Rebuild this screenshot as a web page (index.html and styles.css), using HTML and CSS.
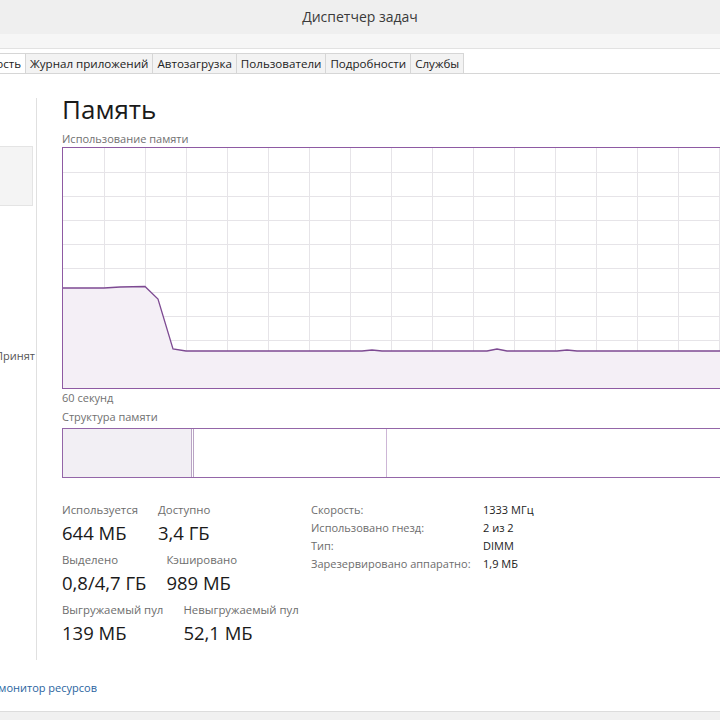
FILE: index.html
```html
<!DOCTYPE html>
<html lang="ru">
<head>
<meta charset="UTF-8">
<title>Диспетчер задач</title>
<link rel="stylesheet" href="styles.css">
</head>
<body>
<div class="window">
    <div class="titlebar">Диспетчер задач</div>
    <div class="menubar"></div>
    <div class="tabs">
        <div class="tab-clip"><div class="tab active">Производительность</div></div>
        <div class="tab">Журнал приложений</div>
        <div class="tab">Автозагрузка</div>
        <div class="tab">Пользователи</div>
        <div class="tab">Подробности</div>
        <div class="tab">Службы</div>
    </div>
    <div class="panes">
        <div class="sidebar">
            <div class="side-item selected"></div>
            <div class="side-text">Принят</div>
        </div>
        <div class="main">
            <h1 class="heading">Память</h1>
            <div class="caption">Использование памяти</div>
            <svg class="graph" width="700" height="242" viewBox="0 0 700 242">
                <g stroke="#e6e4e8" stroke-width="1">
                    <line x1="42.5" y1="1" x2="42.5" y2="241"/>
                    <line x1="83.5" y1="1" x2="83.5" y2="241"/>
                    <line x1="124.5" y1="1" x2="124.5" y2="241"/>
                    <line x1="165.5" y1="1" x2="165.5" y2="241"/>
                    <line x1="206.5" y1="1" x2="206.5" y2="241"/>
                    <line x1="247.5" y1="1" x2="247.5" y2="241"/>
                    <line x1="288.5" y1="1" x2="288.5" y2="241"/>
                    <line x1="329.5" y1="1" x2="329.5" y2="241"/>
                    <line x1="370.5" y1="1" x2="370.5" y2="241"/>
                    <line x1="411.5" y1="1" x2="411.5" y2="241"/>
                    <line x1="452.5" y1="1" x2="452.5" y2="241"/>
                    <line x1="493.5" y1="1" x2="493.5" y2="241"/>
                    <line x1="534.5" y1="1" x2="534.5" y2="241"/>
                    <line x1="575.5" y1="1" x2="575.5" y2="241"/>
                    <line x1="616.5" y1="1" x2="616.5" y2="241"/>
                    <line x1="657.5" y1="1" x2="657.5" y2="241"/>
                    <line x1="1" y1="25.5" x2="700" y2="25.5"/>
                    <line x1="1" y1="49.5" x2="700" y2="49.5"/>
                    <line x1="1" y1="73.5" x2="700" y2="73.5"/>
                    <line x1="1" y1="97.5" x2="700" y2="97.5"/>
                    <line x1="1" y1="121.5" x2="700" y2="121.5"/>
                    <line x1="1" y1="145.5" x2="700" y2="145.5"/>
                    <line x1="1" y1="169.5" x2="700" y2="169.5"/>
                    <line x1="1" y1="193.5" x2="700" y2="193.5"/>
                    <line x1="1" y1="217.5" x2="700" y2="217.5"/>
                </g>
                <path d="M1 141 L42 141 L58 140 L83 139.5 L96 152 L111 202 L124 204 L300 204 L310 203 L320 204 L425 204 L435 202 L445 204 L495 204 L505 203 L515 204 L700 204 L700 241 L1 241 Z" fill="#f4eff6"/>
                <path d="M1 141 L42 141 L58 140 L83 139.5 L96 152 L111 202 L124 204 L300 204 L310 203 L320 204 L425 204 L435 202 L445 204 L495 204 L505 203 L515 204 L700 204" fill="none" stroke="#7d4a92" stroke-width="1.3"/>
                <rect x="0.5" y="0.5" width="720" height="241" fill="none" stroke="#8e5aa3" stroke-width="1"/>
            </svg>
            <div class="caption time">60 секунд</div>
            <div class="caption struct">Структура памяти</div>
            <div class="structure">
                <div class="seg used"></div>
                <div class="seg modified"></div>
                <div class="seg standby"></div>
                <div class="seg free"></div>
            </div>
            <div class="stats">
                <div class="stat-block">
                    <div class="stat-row">
                        <div class="stat"><div class="label">Используется</div><div class="value">644 МБ</div></div>
                        <div class="stat"><div class="label">Доступно</div><div class="value">3,4 ГБ</div></div>
                    </div>
                    <div class="stat-row">
                        <div class="stat"><div class="label">Выделено</div><div class="value">0,8/4,7 ГБ</div></div>
                        <div class="stat"><div class="label">Кэшировано</div><div class="value">989 МБ</div></div>
                    </div>
                    <div class="stat-row">
                        <div class="stat"><div class="label">Выгружаемый пул</div><div class="value">139 МБ</div></div>
                        <div class="stat"><div class="label">Невыгружаемый пул</div><div class="value">52,1 МБ</div></div>
                    </div>
                </div>
                <div class="props">
                    <div class="prop-label">Скорость:</div><div class="prop-value">1333 МГц</div>
                    <div class="prop-label">Использовано гнезд:</div><div class="prop-value">2 из 2</div>
                    <div class="prop-label">Тип:</div><div class="prop-value">DIMM</div>
                    <div class="prop-label">Зарезервировано аппаратно:</div><div class="prop-value">1,9 МБ</div>
                </div>
            </div>
        </div>
    </div>
    <div class="footer">
        <div class="link-clip"><a class="link" href="#">Открыть монитор ресурсов</a></div>
    </div>
    <div class="statusbar"></div>
</div>
</body>
</html>
```

FILE: styles.css
```css
body {
    margin: 0;
    font-family: 'Open Sans', 'Noto Sans', sans-serif;
    color: #1a1a1a;
    background: #fff;
    overflow: hidden;
}

.window {
    width: 720px;
    height: 720px;
    overflow: hidden;
    display: flex;
    flex-direction: column;
}

.titlebar {
    height: 34px;
    line-height: 33px;
    background: #efefef;
    text-align: center;
    font-size: 14px;
    color: #3a3a3a;
}

.menubar {
    height: 14px;
    background: #f6f6f6;
    border-bottom: 1px solid #e2e2e2;
}

.tabs {
    display: flex;
    padding-top: 4px;
    border-bottom: 1px solid #d6d6d6;
    height: 20px;
}

.tab {
    font-size: 11.6px;
    line-height: 19px;
    padding: 0 4px;
    background: #f3f3f3;
    border: 1px solid #d6d6d6;
    border-bottom: none;
    border-left: none;
    color: #222;
    white-space: nowrap;
}

.tab-clip {
    width: 26px;
    display: flex;
    justify-content: flex-end;
    overflow: hidden;
}

.tab.active {
    background: #fff;
    height: 21px;
}

.panes {
    display: flex;
    padding-top: 24px;
    height: 562px;
}

.sidebar {
    width: 36px;
    flex-shrink: 0;
    border-right: 1px solid #e0e0e0;
    display: flex;
    flex-direction: column;
    align-items: flex-end;
    overflow: hidden;
}

.side-item {
    width: 32px;
    height: 58px;
    margin-top: 48px;
    margin-right: 3px;
    background: #f4f4f4;
    border: 1px solid #e4e4e4;
    border-left: none;
}

.side-text {
    margin-top: 143px;
    margin-right: 1px;
    font-size: 11px;
    line-height: 14px;
    color: #555;
    white-space: nowrap;
}

.main {
    padding-left: 25px;
    flex: 1;
    min-width: 0;
}

.heading {
    margin: 0;
    font-size: 26px;
    font-weight: normal;
    line-height: 22px;
}

.caption {
    margin-top: 12px;
    font-size: 11px;
    line-height: 14px;
    color: #707070;
}

.graph {
    display: block;
    margin-top: 1px;
}

.caption.time {
    margin-top: 2px;
}

.caption.struct {
    margin-top: 5px;
}

.structure {
    margin-top: 4px;
    width: 700px;
    height: 48px;
    border: 1px solid #9466a8;
    display: flex;
}

.seg {
    height: 100%;
}

.seg.used {
    width: 128px;
    background: #f2eff4;
}

.seg.modified {
    width: 1px;
    border-left: 1px solid #b9a4c4;
    border-right: 1px solid #b9a4c4;
}

.seg.standby {
    width: 192px;
    border-right: 1px solid #cdb6d6;
}

.seg.free {
    flex: 1;
}

.stats {
    display: flex;
    margin-top: 25px;
}

.stat-block {
    width: 249px;
}

.stat-row {
    display: flex;
    gap: 20px;
    margin-bottom: 7px;
}

.label {
    font-size: 11.4px;
    line-height: 14px;
    color: #6d6d6d;
    white-space: nowrap;
}

.value {
    margin-top: 3px;
    font-size: 18.5px;
    line-height: 26px;
    white-space: nowrap;
}

.props {
    display: grid;
    grid-template-columns: 172px auto;
    align-content: start;
    font-size: 11px;
    line-height: 18px;
    margin-top: -2px;
}

.prop-label {
    color: #6d6d6d;
}

.prop-value {
    color: #222;
}

.footer {
    flex: 1;
    display: flex;
    align-items: center;
}

.link-clip {
    width: 97px;
    display: flex;
    justify-content: flex-end;
    overflow: hidden;
    margin-top: 4px;
}

.link {
    font-size: 11px;
    line-height: 14px;
    color: #2a64a0;
    text-decoration: none;
    white-space: nowrap;
}

.statusbar {
    height: 8px;
    background: #f0f0f0;
    border-top: 1px solid #dcdcdc;
}
```
